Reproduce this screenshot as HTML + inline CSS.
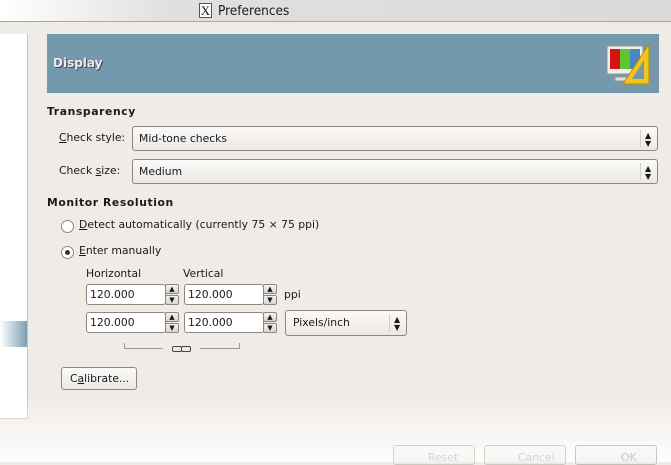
<!DOCTYPE html>
<html><head><meta charset="utf-8"><style>
*{margin:0;padding:0;box-sizing:border-box}
body{width:671px;height:462px;overflow:hidden;background:#efebe7;font-family:"DejaVu Sans","Liberation Sans",sans-serif;font-size:10.8px;color:#1a1a1a;position:relative}
.abs{position:absolute}
.title{left:0;top:0;width:671px;height:22px;background:linear-gradient(to right,#fff 0%,#e2e0de 25%,#dcdad8 100%);border-bottom:1px solid #a9a6a3;font-size:13.5px;font-family:"DejaVu Sans Condensed","DejaVu Sans",sans-serif}
.left{left:0;top:34px;width:28px;height:385px;background:#fff;border-right:1px solid #c9c3bd;border-bottom:1px solid #c9c3bd}
.sel{left:0;top:321px;width:27px;height:26px;background:linear-gradient(to right,#fff,#7d9fb3)}
.hdr{left:47px;top:34px;width:612px;height:59px;background:#7499ad}
.combo{background:linear-gradient(#fbfaf9,#ece8e4);border:1px solid #8f877f;border-radius:3px}
.arr{position:absolute;right:0;top:3px;bottom:3px;width:17px;border-left:1px solid #d4cfca}
.spin{background:#fff;border:1px solid #8f877f;border-radius:3px;height:21px}
.sb{position:absolute;right:1px;width:14px;height:10px;background:linear-gradient(#f5f3f1,#d9d4cf);border:1px solid #8f877f;border-radius:2px;font-size:7px;line-height:8px;text-align:center}
b{font-weight:bold;letter-spacing:.6px}
.fade{left:0;top:395px;width:671px;height:67px;background:linear-gradient(rgba(255,255,255,0),rgba(255,255,255,.95))}
</style></head><body>
<div class="abs title"><span class="abs" style="left:199px;top:3px;width:13px;height:15px;border:1px solid #555;background:#fff;font-family:'Liberation Serif',serif;font-size:13px;line-height:13px;text-align:center">X</span><span class="abs" style="left:218px;top:3px">Preferences</span></div>
<div class="abs left"></div>
<div class="abs sel"></div>
<div class="abs hdr"><span class="abs" style="left:6px;top:22px;color:#e9ecee;font-weight:bold;font-size:12px;text-shadow:1px 1px 0 #445">Display</span>
<svg class="abs" style="left:558px;top:8px" width="48" height="46" viewBox="0 0 48 46">
<rect x="2" y="4" width="36" height="28" rx="2" fill="#eee" stroke="#999"/>
<rect x="5" y="7" width="10" height="20" fill="#d61313"/><rect x="15" y="7" width="10" height="20" fill="#5ec62c"/><rect x="25" y="7" width="10" height="20" fill="#4a86c5"/>
<rect x="10" y="35" width="20" height="4" fill="#ddd" stroke="#999"/>
<path d="M44 2 L44 42 L18 42 Z" fill="#f2c61a" stroke="#b08a10"/><path d="M39 18 L39 37 L27 37 Z" fill="#7499ad"/></svg></div>
<div class="abs" style="left:47px;top:105px"><b>Transparency</b></div>
<div class="abs" style="left:59px;top:131px"><u>C</u>heck style:</div>
<div class="abs combo" style="left:132px;top:126px;width:526px;height:25px"><span class="abs" style="left:6px;top:5px">Mid-tone checks</span><div class="arr"><span class="abs" style="left:4px;top:2px;font-size:8px;line-height:8px">▲<br>▼</span></div></div>
<div class="abs" style="left:59px;top:164px">Check <u>s</u>ize:</div>
<div class="abs combo" style="left:132px;top:159px;width:526px;height:25px"><span class="abs" style="left:6px;top:5px">Medium</span><div class="arr"><span class="abs" style="left:4px;top:2px;font-size:8px;line-height:8px">▲<br>▼</span></div></div>
<div class="abs" style="left:47px;top:196px"><b>Monitor Resolution</b></div>
<div class="abs" style="left:61px;top:220px;width:13px;height:13px;border-radius:50%;border:1px solid #8f877f;background:#fff"></div>
<div class="abs" style="left:79px;top:218px"><u>D</u>etect automatically (currently 75 × 75 ppi)</div>
<div class="abs" style="left:61px;top:246px;width:13px;height:13px;border-radius:50%;border:1px solid #8f877f;background:#fff"><div class="abs" style="left:3px;top:3px;width:5px;height:5px;border-radius:50%;background:#333"></div></div>
<div class="abs" style="left:79px;top:244px"><u>E</u>nter manually</div>
<div class="abs" style="left:86px;top:267px">Horizontal</div>
<div class="abs" style="left:183px;top:267px">Vertical</div>
<div class="abs spin" style="left:86px;top:284px;width:80px"><span class="abs" style="left:3px;top:3px">120.000</span></div>
<div class="abs" style="left:164px;top:284px;width:16px;height:21px"><div class="sb" style="top:0">▲</div><div class="sb" style="top:11px">▼</div></div>
<div class="abs spin" style="left:184px;top:284px;width:80px"><span class="abs" style="left:3px;top:3px">120.000</span></div>
<div class="abs" style="left:262px;top:284px;width:16px;height:21px"><div class="sb" style="top:0">▲</div><div class="sb" style="top:11px">▼</div></div>
<div class="abs" style="left:284px;top:288px">ppi</div>
<div class="abs spin" style="left:86px;top:312px;width:80px"><span class="abs" style="left:3px;top:3px">120.000</span></div>
<div class="abs" style="left:164px;top:312px;width:16px;height:21px"><div class="sb" style="top:0">▲</div><div class="sb" style="top:11px">▼</div></div>
<div class="abs spin" style="left:184px;top:312px;width:80px"><span class="abs" style="left:3px;top:3px">120.000</span></div>
<div class="abs" style="left:262px;top:312px;width:16px;height:21px"><div class="sb" style="top:0">▲</div><div class="sb" style="top:11px">▼</div></div>
<div class="abs combo" style="left:285px;top:310px;width:122px;height:26px"><span class="abs" style="left:7px;top:5px">Pixels/inch</span><div class="arr"><span class="abs" style="left:4px;top:2px;font-size:8px;line-height:8px">▲<br>▼</span></div></div>
<div class="abs" style="left:124px;top:343px;width:39px;height:6px;border-left:1px solid #999;border-bottom:1px solid #999"></div>
<div class="abs" style="left:200px;top:343px;width:40px;height:6px;border-right:1px solid #999;border-bottom:1px solid #999"></div>
<div class="abs" style="left:172px;top:346px;width:10px;height:6px;border:1.5px solid #444;border-radius:2px"></div>
<div class="abs" style="left:181px;top:346px;width:10px;height:6px;border:1.5px solid #444;border-radius:2px"></div>
<div class="abs combo" style="left:61px;top:367px;width:76px;height:23px"><span class="abs" style="left:8px;top:4px">C<u>a</u>librate...</span></div>
<div class="abs fade"></div>
<div class="abs combo" style="left:393px;top:445px;width:82px;height:20px;opacity:.35"><span class="abs" style="left:34px;top:5px;color:#888">Reset</span></div>
<div class="abs combo" style="left:484px;top:445px;width:82px;height:20px;opacity:.35"><span class="abs" style="left:33px;top:5px;color:#888">Cancel</span></div>
<div class="abs combo" style="left:575px;top:445px;width:82px;height:20px;opacity:.45"><span class="abs" style="left:45px;top:5px;color:#888">OK</span></div>
</body></html>
